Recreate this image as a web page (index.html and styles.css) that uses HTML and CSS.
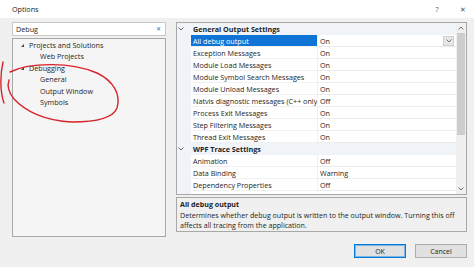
FILE: index.html
```html
<!DOCTYPE html>
<html lang="en">
<head>
    <meta charset="UTF-8">
    <title>Options</title>
    <link rel="stylesheet" href="styles.css">
</head>
<body>
    <div class="dialog">
        <div class="titlebar">
            <span class="title">Options</span>
            <span class="title-btn help">?</span>
            <span class="title-btn close">&#x2715;</span>
        </div>

        <div class="main">
            <div class="left-pane">
                <div class="search">
                    <span>Debug</span>
                    <span class="search-clear">&#x2715;</span>
                </div>
                <ul class="tree">
                    <li class="node"><span class="expander"></span>Projects and Solutions</li>
                    <li class="leaf">Web Projects</li>
                    <li class="node"><span class="expander"></span>Debugging</li>
                    <li class="leaf">General</li>
                    <li class="leaf">Output Window</li>
                    <li class="leaf">Symbols</li>
                </ul>
            </div>

            <div class="right-pane">
                <div class="grid">
                    <div class="rows">
                        <div class="category">
                            <svg class="chevron" width="6" height="4" viewBox="0 0 6 4"><path d="M0.5 0.5 L3 3 L5.5 0.5" fill="none" stroke="#555" stroke-width="0.9"/></svg>
                            General Output Settings
                        </div>
                        <div class="prop selected"><span class="name">All debug output</span><span class="value">On<span class="drop"><svg width="6" height="4" viewBox="0 0 6 4"><path d="M0.5 0.5 L3 3 L5.5 0.5" fill="none" stroke="#666" stroke-width="0.9"/></svg></span></span></div>
                        <div class="prop"><span class="name">Exception Messages</span><span class="value">On</span></div>
                        <div class="prop"><span class="name">Module Load Messages</span><span class="value">On</span></div>
                        <div class="prop"><span class="name">Module Symbol Search Messages</span><span class="value">On</span></div>
                        <div class="prop"><span class="name">Module Unload Messages</span><span class="value">On</span></div>
                        <div class="prop"><span class="name">Natvis diagnostic messages (C++ only)</span><span class="value">Off</span></div>
                        <div class="prop"><span class="name">Process Exit Messages</span><span class="value">On</span></div>
                        <div class="prop"><span class="name">Step Filtering Messages</span><span class="value">On</span></div>
                        <div class="prop"><span class="name">Thread Exit Messages</span><span class="value">On</span></div>
                        <div class="category">
                            <svg class="chevron" width="6" height="4" viewBox="0 0 6 4"><path d="M0.5 0.5 L3 3 L5.5 0.5" fill="none" stroke="#555" stroke-width="0.9"/></svg>
                            WPF Trace Settings
                        </div>
                        <div class="prop"><span class="name">Animation</span><span class="value">Off</span></div>
                        <div class="prop"><span class="name">Data Binding</span><span class="value">Warning</span></div>
                        <div class="prop"><span class="name">Dependency Properties</span><span class="value">Off</span></div>
                    </div>
                    <div class="scrollbar">
                        <svg class="arrow" width="6" height="4" viewBox="0 0 6 4"><path d="M0.5 3.5 L3 1 L5.5 3.5" fill="none" stroke="#606060" stroke-width="0.9"/></svg>
                        <div class="track"><div class="thumb"></div></div>
                        <svg class="arrow" width="6" height="4" viewBox="0 0 6 4"><path d="M0.5 0.5 L3 3 L5.5 0.5" fill="none" stroke="#606060" stroke-width="0.9"/></svg>
                    </div>
                </div>

                <div class="description">
                    <div class="desc-title">All debug output</div>
                    <div class="desc-text">Determines whether debug output is written to the output window. Turning this off affects all tracing from the application.</div>
                </div>
            </div>
        </div>

        <div class="footer">
            <button class="btn default">OK</button>
            <button class="btn">Cancel</button>
        </div>
    </div>

    <!-- hand-drawn annotation on top of the screenshot -->
    <svg class="annotation" width="474" height="267" viewBox="0 0 474 267">
        <path d="M3 62 C0 75, 0 92, 4 103" fill="none" stroke="#d8232a" stroke-width="1.4" stroke-linecap="round"/>
        <path d="M10 72 C30 62, 72 62, 97 73 C114 81, 121 95, 117 108 C113 118, 96 122, 72 122 C45 121, 25 111, 14 99 C9 93, 7 86, 9 80" fill="none" stroke="#d8232a" stroke-width="1.4" stroke-linecap="round"/>
    </svg>
</body>
</html>
```

FILE: styles.css
```css
* {
    margin: 0;
    padding: 0;
    box-sizing: border-box;
}

body {
    width: 474px;
    height: 267px;
    overflow: hidden;
    background: #f0f0f0;
    font-family: 'Open Sans', 'Noto Sans', sans-serif;
    font-size: 7.1px;
    color: #1e1e1e;
    position: relative;
}

.dialog {
    display: flex;
    flex-direction: column;
    height: 100%;
}

.titlebar {
    height: 18px;
    background: #ffffff;
    display: flex;
    align-items: center;
    padding: 0 3px 0 12px;
    font-size: 7.2px;
}

.title {
    flex: 1;
    color: #222;
}

.title-btn {
    color: #555;
    text-align: center;
}

.help {
    width: 36px;
}

.close {
    width: 16px;
}

.main {
    display: flex;
    gap: 10px;
    padding: 4px 7px 0 12px;
}

.left-pane {
    width: 154px;
    display: flex;
    flex-direction: column;
    gap: 2px;
}

.search {
    height: 14px;
    background: #ffffff;
    border: 1px solid #c8c8c8;
    display: flex;
    align-items: center;
    justify-content: space-between;
    padding: 0 4px 0 3px;
    font-size: 7.2px;
}

.search-clear {
    color: #2a6fc2;
    font-size: 6px;
}

.tree {
    list-style: none;
    height: 199px;
    background: #f5f5f5;
    border: 1px solid #a8a8a8;
    padding-top: 0.5px;
    font-size: 7.2px;
}

.tree li {
    height: 11.5px;
    line-height: 11.5px;
    white-space: nowrap;
}

.node {
    padding-left: 8px;
    display: flex;
    align-items: center;
}

.leaf {
    padding-left: 27px;
}

.expander {
    width: 0;
    height: 0;
    border-left: 3px solid transparent;
    border-bottom: 3px solid #444;
    margin-right: 5px;
}

.right-pane {
    flex: 1;
    display: flex;
    flex-direction: column;
    gap: 2px;
}

.grid {
    height: 173px;
    background: #ffffff;
    border: 1px solid #a8a8a8;
    display: flex;
    overflow: hidden;
}

.rows {
    flex: 1;
    font-size: 7.2px;
    background: linear-gradient(to right, #f0f3f8 14px, #ffffff 14px);
}

.category {
    height: 12px;
    display: flex;
    align-items: center;
    background: #f0f3f8;
    font-weight: bold;
    color: #1e1e1e;
}

.chevron {
    margin: 0 9px 0 1px;
}

.prop {
    height: 12px;
    display: flex;
    align-items: stretch;
    margin-left: 14px;
    white-space: nowrap;
}

.name {
    width: 126px;
    overflow: hidden;
    padding-left: 2px;
    line-height: 12px;
    border-bottom: 1px solid #f0f0f0;
}

.value {
    flex: 1;
    display: flex;
    align-items: center;
    padding-left: 2px;
    border-bottom: 1px solid #ececec;
    border-left: 1px solid #f0f0f0;
}

.selected .name {
    background: #0f74d6;
    color: #ffffff;
}

.drop {
    margin-left: auto;
    margin-right: 2px;
    width: 11px;
    height: 10px;
    background: #e6e6e6;
    border: 1px solid #cfcfcf;
    display: flex;
    align-items: center;
    justify-content: center;
}

.scrollbar {
    width: 10px;
    background: #f0f0f0;
    display: flex;
    flex-direction: column;
    align-items: center;
}

.arrow {
    margin: 3px 0;
}

.track {
    flex: 1;
    width: 100%;
}

.thumb {
    height: 102px;
    background: #cdcdcd;
    margin: 0 1px;
}

.description {
    height: 35px;
    border: 1px solid #a8a8a8;
    padding: 1px 3px;
    line-height: 10.5px;
}

.desc-title {
    font-weight: bold;
}

.footer {
    margin: 0 7px 0 12px;
    display: flex;
    justify-content: flex-end;
    gap: 9px;
    padding-top: 7px;
}

.btn {
    width: 52px;
    height: 14px;
    background: #e1e1e1;
    border: 1px solid #adadad;
    font-family: 'Open Sans', 'Noto Sans', sans-serif;
    font-size: 7px;
    color: #1e1e1e;
}

.btn.default {
    border-color: #0078d7;
    box-shadow: inset 0 0 0 1px #7fb6e6;
}

.annotation {
    position: absolute;
    left: 0;
    top: 0;
    pointer-events: none;
}
```
